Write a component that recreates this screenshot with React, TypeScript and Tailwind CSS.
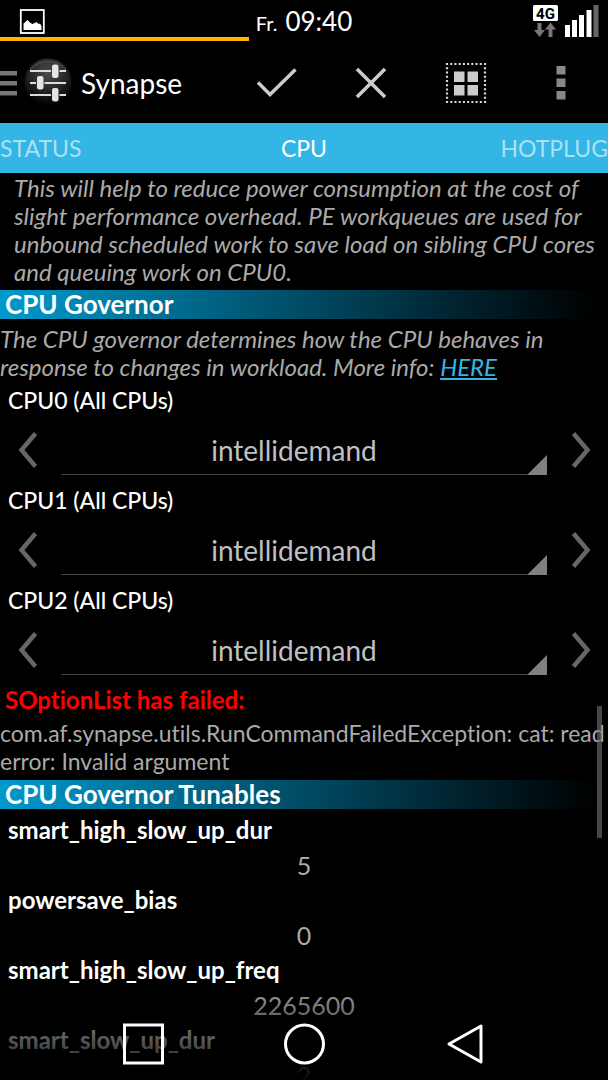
import React from 'react'

interface CpuOption {
  id: string
  label: string
  value: string
}

interface Tunable {
  name: string
  value: string
}

const cpus: CpuOption[] = [
  { id: 'cpu0', label: 'CPU0 (All CPUs)', value: 'intellidemand' },
  { id: 'cpu1', label: 'CPU1 (All CPUs)', value: 'intellidemand' },
  { id: 'cpu2', label: 'CPU2 (All CPUs)', value: 'intellidemand' }
]

const tunables: Tunable[] = [
  { name: 'smart_high_slow_up_dur', value: '5' },
  { name: 'powersave_bias', value: '0' },
  { name: 'smart_high_slow_up_freq', value: '2265600' },
  { name: 'smart_slow_up_dur', value: '2' }
]

const StatusBar: React.FC = () => (
  <div className="relative grid h-[41px] shrink-0 grid-cols-3 items-start">
    <svg className="mt-[9px] ml-[19px] h-[25px] w-[26px]" viewBox="0 0 26 25" fill="none">
      <rect x="1.8" y="1" width="23" height="23" stroke="#fff" strokeWidth="1.8" />
      <path d="M4.5 21v-6.500l4-3.500 3 3 2 1 4-2 2 2 1.500-.5 1.500 2.500V21z" fill="#fff" />
    </svg>
    <div className="mt-[7px] flex items-baseline justify-center gap-2 leading-7">
      <span className="text-xl leading-7">Fr.</span>
      <span className="text-[26px] leading-7">09:40</span>
    </div>
    <svg className="mt-[4px] mr-[8px] h-[34px] w-[68px] justify-self-end" viewBox="0 0 68 34">
      <rect x="1" y="1" width="25" height="16" rx="1.500" fill="#fff" />
      <text x="13.500" y="14.500" textAnchor="middle" fontSize="15" fontWeight="700" fontFamily="Roboto, sans-serif" fill="#000">4G</text>
      <path d="M5.500 19h4v7h3.500l-5.500 7-5.500-7h3.500z M16.500 33h4v-7.500H24l-5.500-7-5.500 7h3.500z" fill="#777" />
      <path d="M33 21h5v12h-5z M40 16h5v17h-5z M47 11h5v22h-5z M54.500 6h5v27h-5z" fill="#fff" />
      <path d="M61.500 1h5v32h-5z" fill="#666" />
    </svg>
    {/* Progress line */}
    <div className="absolute bottom-0 left-0 h-1 w-[41%] bg-[#ffb300]" />
  </div>
)

const ActionBar: React.FC = () => (
  <header className="flex h-[82px] shrink-0 items-center pt-0.5">
    <button type="button" aria-label="Open menu" className="w-[18px] shrink-0">
      <svg className="h-[26px] w-[18px]" viewBox="0 0 18 26" fill="#777">
        <path d="M0 1h17v4.500H0z M0 11h17v4.500H0z M0 21h17v4.500H0z" />
      </svg>
    </button>
    <svg className="ml-[5px] h-[50px] w-[50px] shrink-0" viewBox="0 0 50 50">
      <defs>
        <radialGradient id="logo" cx="50%" cy="30%" r="65%">
          <stop offset="0" stopColor="#4c4c4c" />
          <stop offset="0.6" stopColor="#262626" />
          <stop offset="1" stopColor="#050505" />
        </radialGradient>
      </defs>
      <circle cx="25" cy="24" r="23.500" fill="url(#logo)" />
      <path d="M7 12a23 22 0 0 1 36 0" fill="none" stroke="#555" strokeWidth="1" />
      <path d="M7 13h21M36.500 13H43M7 25h6M21.500 25H43M7 37h21M36.500 37H43" stroke="#ddd" strokeWidth="2.200" />
      <g fill="#e2e4e6">
        <rect x="29" y="6.500" width="6.500" height="13.500" rx="2.200" />
        <rect x="14" y="18" width="6.500" height="13.500" rx="2.200" />
        <rect x="29" y="30" width="6.500" height="13.500" rx="2.200" />
      </g>
    </svg>
    <h1 className="ml-2 w-[148px] shrink text-[28px] leading-8">Synapse</h1>
    <div className="flex flex-1 items-center justify-around">
      <button type="button" aria-label="Apply" className="flex flex-1 justify-center">
        <svg className="h-[32px] w-[42px]" viewBox="0 0 42 32" fill="none" stroke="#ccc" strokeWidth="3.500">
          <path d="M3 15.500l12 12L40.500 2.500" />
        </svg>
      </button>
      <button type="button" aria-label="Cancel" className="flex flex-1 justify-center">
        <svg className="h-[32px] w-[32px]" viewBox="0 0 32 32" fill="none" stroke="#ccc" strokeWidth="3.500">
          <path d="M2 2l28 28M30 2L2 30" />
        </svg>
      </button>
      <button type="button" aria-label="Select all" className="flex flex-1 justify-center">
        <svg className="h-[42px] w-[42px]" viewBox="0 0 42 42">
          <rect x="2" y="2" width="38" height="38" fill="none" stroke="#ddd" strokeWidth="2.200" strokeDasharray="2 2.220" strokeDashoffset="1" />
          <path d="M9 9.500h10.500v10.500H9z M22.500 9.500H33v10.500H22.500z M9 23h10.500v10.500H9z M22.500 23H33v10.500H22.500z" fill="#ccc" />
        </svg>
      </button>
      <button type="button" aria-label="More options" className="flex flex-1 justify-center">
        <svg className="h-[36px] w-[10px]" viewBox="0 0 10 36" fill="#888">
          <path d="M.5 1h9v8.500h-9z M.5 13.500h9v8.500h-9z M.5 26h9v8.500h-9z" />
        </svg>
      </button>
    </div>
  </header>
)

const SectionHeader: React.FC<{ title: string }> = ({ title }) => (
  <h2 className="h-[29px] bg-linear-to-r/srgb from-[#0099cc] to-black to-98% px-[5px] text-[26px] leading-[29px] font-bold">
    {title}
  </h2>
)

const OptionRow: React.FC<{ option: CpuOption }> = ({ option }) => (
  <div>
    <label htmlFor={option.id} className="block px-2 text-[23px] leading-7 font-medium">
      {option.label}
    </label>
    <div className="flex h-[72px] items-center">
      <button type="button" aria-label="Previous" className="flex w-[61px] justify-center pr-[6px]">
        <svg className="h-[36px] w-[20px]" viewBox="0 0 20 36" fill="none" stroke="#666" strokeWidth="4.500">
          <path d="M17.500 1.500L3.500 18l14 16.500" />
        </svg>
      </button>
      <div className="relative flex-1">
        <select
          id={option.id}
          defaultValue={option.value}
          className="block h-[50px] w-full appearance-none border-b border-[#444] bg-transparent pr-5 text-center text-[28px] text-[#c0c0c0]"
        >
          <option>{option.value}</option>
        </select>
        <svg className="pointer-events-none absolute right-0 bottom-0 h-5 w-5" viewBox="0 0 20 20" fill="#808080">
          <path d="M20 0v20H0z" />
        </svg>
      </div>
      <button type="button" aria-label="Next" className="flex w-[61px] justify-center pl-[6px]">
        <svg className="h-[36px] w-[20px]" viewBox="0 0 20 36" fill="none" stroke="#666" strokeWidth="4.500">
          <path d="M2.500 1.500L16.500 18l-14 16.500" />
        </svg>
      </button>
    </div>
  </div>
)

const NavBar: React.FC = () => (
  <nav className="absolute inset-x-0 bottom-0 flex h-24 items-end justify-center gap-[120px] bg-linear-to-b/srgb from-transparent via-black/60 via-50% to-black/95 pb-[15px]">
    <button type="button" aria-label="Recent apps">
      <svg className="h-[42px] w-[41px]" viewBox="0 0 41 42" fill="none" stroke="#fff" strokeWidth="3">
        <rect x="1.500" y="2" width="38" height="38" />
      </svg>
    </button>
    <button type="button" aria-label="Home">
      <svg className="h-[42px] w-[41px]" viewBox="0 0 41 42" fill="none" stroke="#fff" strokeWidth="3">
        <circle cx="20.500" cy="21" r="19" />
      </svg>
    </button>
    <button type="button" aria-label="Back">
      <svg className="h-[42px] w-[41px]" viewBox="0 0 41 42" fill="none" stroke="#fff" strokeWidth="3">
        <path d="M36 3v36L4 21z" strokeLinejoin="round" />
      </svg>
    </button>
  </nav>
)

export default function App() {
  return (
    <div className="relative flex h-screen flex-col overflow-hidden bg-black font-['Lato',sans-serif] text-white [font-variant-ligatures:none]">
      <StatusBar />
      <ActionBar />

      {/* Tabs */}
      <div role="tablist" className="grid h-[50px] shrink-0 grid-cols-3 bg-[#33b5e5] text-[23px]">
        <button type="button" role="tab" aria-selected="false" className="text-left text-white/60">STATUS</button>
        <button type="button" role="tab" aria-selected="true" className="text-center">CPU</button>
        <button type="button" role="tab" aria-selected="false" className="text-right text-white/60">HOTPLUG</button>
      </div>

      <main className="relative min-h-0 flex-1 overflow-hidden">
        <p className="mt-px mb-1 pl-[14px] text-2xl leading-7 whitespace-nowrap text-[#aaa] italic">
          This will help to reduce power consumption at the cost of<br />
          slight performance overhead. PE workqueues are used for<br />
          unbound scheduled work to save load on sibling CPU cores<br />
          and queuing work on CPU0.
        </p>

        <SectionHeader title="CPU Governor" />
        <p className="mt-[6px] mb-[5px] text-2xl leading-7 whitespace-nowrap text-[#aaa] italic">
          The CPU governor determines how the CPU behaves in<br />
          response to changes in workload. More info:{' '}
          <a href="#info" className="text-[#33b5e5] underline">HERE</a>
        </p>
        {cpus.map(option => (
          <OptionRow key={option.id} option={option} />
        ))}

        <h3 className="px-[5px] text-2xl leading-7 font-bold text-[#ff0000]">SOptionList has failed:</h3>
        <p className="mt-[5px] mb-[5px] text-[23px] leading-7 whitespace-nowrap text-[#aaa]">
          com.af.synapse.utils.RunCommandFailedException: cat: read<br />
          error: Invalid argument
        </p>

        <SectionHeader title="CPU Governor Tunables" />
        <dl className="mt-[7px]">
          {tunables.map(tunable => (
            <div key={tunable.name}>
              <dt className="px-2 text-2xl leading-7 font-bold">{tunable.name}</dt>
              <dd className="text-center text-[25px] leading-[42px] text-[#aaa]">{tunable.value}</dd>
            </div>
          ))}
        </dl>

        {/* Scroll thumb */}
        <div className="absolute top-[533px] right-[6px] h-[132px] w-[5px] bg-[#777]/60" />
      </main>

      <NavBar />
    </div>
  )
}
